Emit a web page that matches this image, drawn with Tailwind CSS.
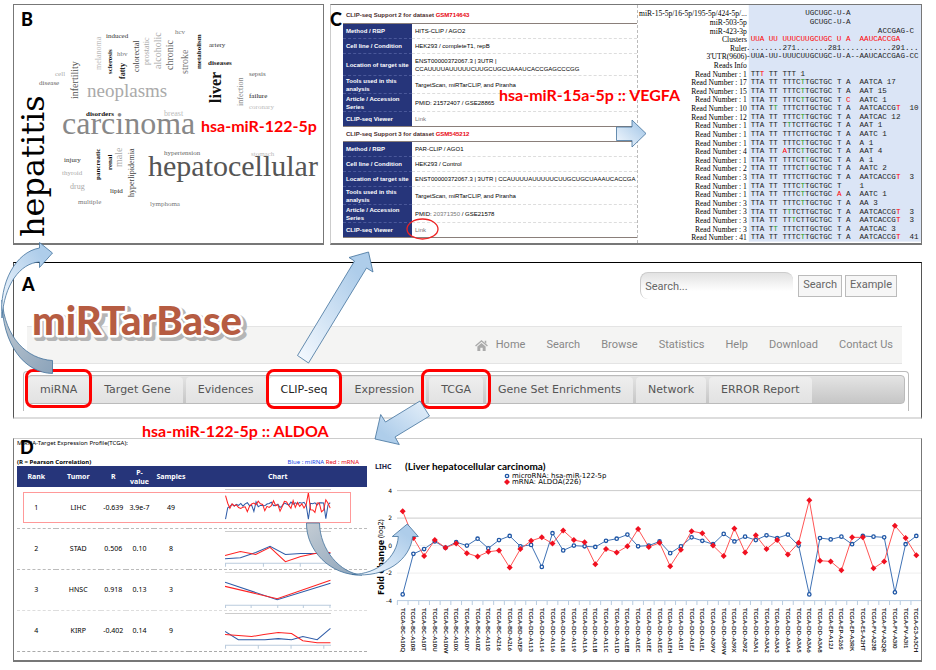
<!DOCTYPE html>
<html lang="en">
<head>
  <meta charset="UTF-8" />
  <meta name="viewport" content="width=device-width, initial-scale=1.0" />
  <title>miRTarBase</title>
  <script src="https://cdn.jsdelivr.net/npm/@tailwindcss/browser@4"></script>
</head>
<body class="bg-white text-black">

  <main class="relative w-full pt-1 pl-[13px] pr-[14px] pb-2">

    <div class="grid grid-cols-[311fr_592fr] gap-[6px]">

      <!-- B: word cloud -->
      <section class="border border-[#777] border-b-2">
        <svg id="cloud" viewBox="14 5 309 238" class="block w-full"></svg>
      </section>

      <!-- C: CLIP-seq support -->
      <section class="grid grid-cols-[308fr_284fr] border border-l-[#ccc] border-[#777] border-b-2">
        <div class="pl-3 pt-[6px] font-['Liberation_Sans',sans-serif] text-[6px] leading-[8px] border-r border-dashed border-[#bbb]">
          <h2 class="pl-[3px] pb-[4px] font-bold text-[#4a2c2c]">CLIP-seq Support 2 for dataset <span class="text-red-600">GSM714643</span></h2>
          <table class="w-full border-y border-[#8a7f7a]">
            <tbody>
              <tr class="h-[15px]"><th class="w-[69px] bg-[#26357a] text-white text-left pl-[3px] border-b border-dashed border-[#4a589a]">Method / RBP</th><td class="pl-[3px] border-b border-dashed border-[#ddd]">HITS-CLIP / AGO2</td></tr>
              <tr class="h-[15px]"><th class="bg-[#26357a] text-white text-left pl-[3px] border-b border-dashed border-[#4a589a]">Cell line / Condition</th><td class="pl-[3px] border-b border-dashed border-[#ddd]">HEK293 / completeT1, repB</td></tr>
              <tr class="h-[22px]"><th class="bg-[#26357a] text-white text-left pl-[3px] border-b border-dashed border-[#4a589a]">Location of target site</th><td class="pl-[3px] border-b border-dashed border-[#ddd]">ENST00000372067.3 | 3UTR |<br>CCAUUUUAUUUUUCUUGCUGCUAAAUCACCGAGCCCGG</td></tr>
              <tr class="h-[18px]"><th class="bg-[#26357a] text-white text-left pl-[3px] border-b border-dashed border-[#4a589a]">Tools used in this<br>analysis</th><td class="pl-[3px] border-b border-dashed border-[#ddd]">TargetScan, miRTarCLIP, and Piranha</td></tr>
              <tr class="h-[18px]"><th class="bg-[#26357a] text-white text-left pl-[3px] border-b border-dashed border-[#4a589a]">Article / Accession<br>Series</th><td class="pl-[3px] border-b border-dashed border-[#ddd]">PMID: 21572407 / GSE28865</td></tr>
              <tr class="h-[15px]"><th class="bg-[#26357a] text-white text-left pl-[3px]">CLIP-seq Viewer</th><td class="pl-[3px]"><a href="#" class="text-[#777]">Link</a></td></tr>
            </tbody>
          </table>
          <h2 class="pl-[3px] pt-[3px] pb-[3px] font-bold text-[#4a2c2c]">CLIP-seq Support 3 for dataset <span class="text-red-600">GSM545212</span></h2>
          <table class="w-full border-y border-[#8a7f7a]">
            <tbody>
              <tr class="h-[15px]"><th class="w-[69px] bg-[#26357a] text-white text-left pl-[3px] border-b border-dashed border-[#4a589a]">Method / RBP</th><td class="pl-[3px] border-b border-dashed border-[#ddd]">PAR-CLIP / AGO1</td></tr>
              <tr class="h-[15px]"><th class="bg-[#26357a] text-white text-left pl-[3px] border-b border-dashed border-[#4a589a]">Cell line / Condition</th><td class="pl-[3px] border-b border-dashed border-[#ddd]">HEK293 / Control</td></tr>
              <tr class="h-[15px]"><th class="bg-[#26357a] text-white text-left pl-[3px] border-b border-dashed border-[#4a589a]">Location of target site</th><td class="pl-[3px] whitespace-nowrap border-b border-dashed border-[#ddd]">ENST00000372067.3 | 3UTR | CCAUUUUAUUUUUCUUGCUGCUAAAUCACCGA</td></tr>
              <tr class="h-[18px]"><th class="bg-[#26357a] text-white text-left pl-[3px] border-b border-dashed border-[#4a589a]">Tools used in this<br>analysis</th><td class="pl-[3px] border-b border-dashed border-[#ddd]">TargetScan, miRTarCLIP, and Piranha</td></tr>
              <tr class="h-[18px]"><th class="bg-[#26357a] text-white text-left pl-[3px] border-b border-dashed border-[#4a589a]">Article / Accession<br>Series</th><td class="pl-[3px] border-b border-dashed border-[#ddd]">PMID: <span class="text-[#777]">20371350</span> / GSE21578</td></tr>
              <tr class="h-[15px]"><th class="bg-[#26357a] text-white text-left pl-[3px]">CLIP-seq Viewer</th><td class="pl-[3px]"><a href="#" class="text-[#777]">Link</a></td></tr>
            </tbody>
          </table>
        </div>
        <svg id="reads" viewBox="0 0 299 250" class="block w-full text-[8px]"></svg>
      </section>
    </div>

    <!-- A: site header -->
    <section class="relative mt-[17px] pt-[9px] pb-[6px] border border-t-black border-x-[#555] border-b-2 border-b-[#ddd]">
      <form class="flex justify-end items-center gap-[3px] pr-6 font-['Roboto',sans-serif] text-[11px] text-[#666]">
        <input type="text" aria-label="Search" placeholder="Search..." class="w-[153px] h-[27px] mr-[2px] pl-1 rounded-lg border-t border-l border-[#ccc] bg-linear-to-b from-[#e2e2e2] to-white to-70% placeholder:text-[#666]" />
        <button type="button" class="h-[22px] px-1 border border-[#bbb] bg-[#f6f6f6]">Search</button>
        <button type="button" class="h-[22px] px-1 border border-[#bbb] bg-[#f6f6f6]">Example</button>
      </form>

      <nav class="flex justify-end items-center h-[38px] mt-[27px] ml-[13px] mr-[19px] pr-[9px] bg-[#f4f4f3] border-y border-[#e4e4e4] font-['Roboto',sans-serif] text-[11px] text-[#888]">
        <a href="#" class="flex items-center gap-2">
          <svg viewBox="0 0 14 12" class="w-[13px] h-[11px]" fill="#aaa"><path d="M7 0 L14 6 L13 7 L7 2 L1 7 L0 6 Z M10.500 0.800 H12.200 V4 L10.500 2.500 Z M2.500 7 L7 3.200 L11.500 7 V12 H8.300 V8.500 H5.700 V12 H2.500 Z"/></svg>
          Home</a>
        <a href="#" class="ml-[21px]">Search</a>
        <a href="#" class="ml-[21px]">Browse</a>
        <a href="#" class="ml-[21px]">Statistics</a>
        <a href="#" class="ml-[21px]">Help</a>
        <a href="#" class="ml-[21px]">Download</a>
        <a href="#" class="ml-[21px]">Contact Us</a>
      </nav>

      <div class="mt-[7px] ml-[9px] mr-3 h-[40px] pt-[3px] px-[3px] border-t border-x border-[#bbb] rounded-t">
        <div class="flex items-end gap-[3px] h-[29px] rounded-sm border border-[#bbb] bg-linear-to-b from-[#e4e4e4] to-[#c6c6c6] font-['DejaVu_Sans',sans-serif] text-[11px] text-[#555]">
          <a href="#" class="relative px-3 h-[26px] leading-[26px] whitespace-nowrap rounded-t bg-linear-to-b from-[#eee] to-[#e2e2e2]">miRNA<span class="absolute -inset-x-[3px] -top-2 -bottom-[5px] border-[3px] border-[#f00] rounded-lg"></span></a>
          <a href="#" class="px-3 h-[26px] leading-[26px] whitespace-nowrap rounded-t bg-linear-to-b from-[#eee] to-[#e2e2e2]">Target Gene</a>
          <a href="#" class="px-3 h-[26px] leading-[26px] whitespace-nowrap rounded-t bg-linear-to-b from-[#eee] to-[#e2e2e2]">Evidences</a>
          <a href="#" class="relative px-3 h-[26px] leading-[26px] whitespace-nowrap rounded-t bg-white text-[#222]">CLIP-seq<span class="absolute -inset-x-[3px] -top-2 -bottom-[6px] border-[3px] border-[#f00] rounded-lg"></span></a>
          <a href="#" class="px-3 h-[26px] leading-[26px] whitespace-nowrap rounded-t bg-linear-to-b from-[#eee] to-[#e2e2e2]">Expression</a>
          <a href="#" class="relative px-3 h-[26px] leading-[26px] whitespace-nowrap rounded-t bg-linear-to-b from-[#eee] to-[#e2e2e2]">TCGA<span class="absolute -inset-x-2 -top-2 -bottom-[6px] border-[3px] border-[#f00] rounded-lg"></span></a>
          <a href="#" class="px-3 h-[26px] leading-[26px] whitespace-nowrap rounded-t bg-linear-to-b from-[#eee] to-[#e2e2e2]">Gene Set Enrichments</a>
          <a href="#" class="px-3 h-[26px] leading-[26px] whitespace-nowrap rounded-t bg-linear-to-b from-[#eee] to-[#e2e2e2]">Network</a>
          <a href="#" class="px-3 h-[26px] leading-[26px] whitespace-nowrap rounded-t bg-linear-to-b from-[#eee] to-[#e2e2e2]">ERROR Report</a>
        </div>
      </div>
    </section>

    <!-- D: expression profile -->
    <section class="grid grid-cols-[353fr_554fr] mt-[19px] border border-t-[#ccc] border-[#777] border-b-2">
      <div class="pl-[3px] pb-[8px] font-['Noto_Sans',sans-serif] text-[7px] leading-[9px]">
        <p class="text-[6px] leading-[8px]">MiRNA-Target Expression Profile(TCGA):</p>
        <div class="flex justify-between mt-[11px] pr-2 text-[6px] leading-[8px]">
          <b>(R = Pearson Correlation)</b>
          <span><span class="text-blue-700">Blue : miRNA</span> <span class="text-red-600">Red : mRNA</span></span>
        </div>
        <table class="w-full table-fixed text-center border-b border-dashed border-[#aaa]">
          <thead>
            <tr class="h-[21px] bg-[#26357a] text-white">
              <th class="w-[11%]">Rank</th><th class="w-[13%]">Tumor</th><th class="w-[7%]">R</th><th class="w-[8%]">P-<br>value</th><th class="w-[10%]">Samples</th><th>Chart</th>
            </tr>
          </thead>
          <tbody>
            <tr class="relative h-[41px]">
              <td>1<span class="absolute left-[6px] right-4 top-[5px] bottom-[5px] border border-[#f99]"></span></td><td>LIHC</td><td>-0.639</td><td>3.9e-7</td><td>49</td>
              <td class="px-9"><svg id="spark" viewBox="226 489 104 37" class="block w-full"></svg></td>
            </tr>
            <tr class="h-[41px] border-t border-dashed border-[#bbb]">
              <td>2</td><td>STAD</td><td>0.506</td><td>0.10</td><td>8</td>
              <td class="px-9"><svg viewBox="226 531 104 37" fill="none" class="block w-full">
                <path stroke="#ccc" d="M226 532.500 H330"/>
                <path stroke="#bcd" d="M226 563.500 H330 M226.500 563 v4 M263.500 563 v4 M299.500 563 v4"/>
                <path stroke="#2f5ca8" d="M226 559 L241 558 L256 553 L270 547 L285 555 L300 554 L329 554"/>
                <path stroke="#f22" d="M226 556 L241 552 L256 555 L270 548 L285 562 L300 557 L314 554 L329 553"/>
              </svg></td>
            </tr>
            <tr class="h-[41px] border-t border-dashed border-[#bbb]">
              <td>3</td><td>HNSC</td><td>0.918</td><td>0.13</td><td>3</td>
              <td class="px-9"><svg viewBox="226 571 104 37" fill="none" class="block w-full">
                <path stroke="#ddd" d="M226 572.500 H330"/>
                <path stroke="#bcd" d="M226 604.500 H330 M226.500 604 v4 M251.500 604 v4 M277.500 604 v4 M302.500 604 v4 M328.500 604 v4"/>
                <path stroke="#2f5ca8" d="M226 582 L277 599 L329 583"/>
                <path stroke="#f22" d="M226 586 L277 598 L329 580"/>
              </svg></td>
            </tr>
            <tr class="h-[41px] border-t border-dashed border-[#ddd]">
              <td>4</td><td>KIRP</td><td>-0.402</td><td>0.14</td><td>9</td>
              <td class="px-9"><svg viewBox="226 612 104 37" fill="none" class="block w-full">
                <path stroke="#ccc" d="M226 613.500 H330"/>
                <path stroke="#bcd" d="M226 644.500 H330 M226.500 644 v4 M258.500 644 v4 M290.500 644 v4 M322.500 644 v4"/>
                <path stroke="#2f5ca8" d="M226 631 L239 639 L265 639 L278 638 L291 639 L302 636 L316 639 L329 628"/>
                <path stroke="#f22" d="M226 634 L252 636 L264 634 L278 632 L291 633 L302 640 L316 642 L329 642"/>
              </svg></td>
            </tr>
          </tbody>
        </table>
      </div>
      <svg id="chart" viewBox="367 439 554 221" class="block w-full"></svg>
    </section>

    <!-- annotations and arrows over all panels -->
    <svg viewBox="0 0 936 670" class="absolute top-0 left-0 w-full pointer-events-none font-['Lato',sans-serif] font-bold">
      <defs>
        <linearGradient id="up" x1="0" y1="1" x2="1" y2="0"><stop offset="0" stop-color="#f6faff"/><stop offset="0.800" stop-color="#aecdea"/></linearGradient>
        <linearGradient id="down" x1="1" y1="0" x2="0" y2="1"><stop offset="0" stop-color="#e6f0fa"/><stop offset="0.800" stop-color="#aecdea"/></linearGradient>
        <linearGradient id="dark" x1="0" y1="0" x2="1" y2="1"><stop offset="0" stop-color="#c4ccd4"/><stop offset="1" stop-color="#8ba3ba"/></linearGradient>
      </defs>
      <g font-size="18" font-weight="900">
        <text x="21" y="26">B</text>
        <text x="330" y="26">C</text>
        <text x="22" y="291">A</text>
        <text x="20" y="454">D</text>
      </g>

      <!-- logo -->
      <g font-size="40" font-weight="900" stroke-linejoin="round">
        <text x="35" y="338" fill="#b5b5b5" stroke="#b5b5b5" stroke-width="6">miRTarBase</text>
        <text x="32" y="335" fill="#b65c42" stroke="#fff" stroke-width="5" paint-order="stroke">miRTarBase</text>
      </g>

      <g font-size="16" fill="#f00">
        <text x="201" y="132">hsa-miR-122-5p</text>
        <text x="499" y="101">hsa-miR-15a-5p :: VEGFA</text>
        <text x="142" y="437">hsa-miR-122-5p :: ALDOA</text>
      </g>
      <ellipse cx="422.500" cy="229" rx="15.500" ry="10" fill="none" stroke="#e22" stroke-width="1.300"/>
      <g stroke="#41719c" stroke-width="0.800" stroke-linejoin="round">
        <path fill="url(#dark)" d="M2 300 C2 345 25 373 52.500 373.500 V360.500 C27 359 5 338 2 300 Z"/>
        <path fill="url(#up)" d="M2 318 C-1 282 16 252 39.500 248 V242.500 L52.500 253 L39.500 267.500 V262 C20 263 4 285 2 318 Z"/>
        <path fill="url(#up)" d="M297.500 355.500 L354.500 261 L349 257.500 L368.500 252 L373 272 L366.500 268 L308.500 363 Z"/>
        <path fill="url(#down)" d="M420 401 L385.500 422 L380.700 414.500 L375 439 L399.300 444.500 L395 437 L429.500 416 Z"/>
        <path fill="url(#up)" d="M616.500 127 H632 V120 L646 133.500 L632 147 V140.500 H616.500 Z"/>
        <path fill="url(#dark)" d="M306.500 523 C306 550 330 576 362 575 C340 573 320 550 319.500 523 Z"/>
        <path fill="url(#up)" d="M352 574.500 C378 574 397 557 398.300 536.500 H392.300 L407.300 524 L418.300 536.500 H412.700 C410 560 386 578 352 574.500 Z"/>
      </g>
    </svg>
  </main>

  <script>
    const NS = "http://www.w3.org/2000/svg";

    function add(parent, tag, attrs, text) {
      const el = document.createElementNS(NS, tag);
      for (const k in attrs) el.setAttribute(k, attrs[k]);
      if (text) el.textContent = text;
      parent.appendChild(el);
      return el;
    }

    // word, x, baseline, size, colour, weight, rotated
    const words = [
      ["hepatitis", 44, 237, 32, "#000", 400, 1],
      ["carcinoma", 62, 134, 32, "#888", 400, 0],
      ["hepatocellular", 148, 176, 30, "#555", 400, 0],
      ["neoplasms", 87, 97, 19, "#aaa", 400, 0],
      ["liver", 221, 103, 16, "#111", 700, 1],
      ["induced", 106, 38, 7, "#333", 400, 0],
      ["hbv", 117, 56, 7, "#777", 400, 0],
      ["hcv", 175, 34, 7, "#777", 400, 0],
      ["artery", 209, 47, 7, "#333", 400, 0],
      ["diseases", 208, 65, 7, "#222", 700, 0],
      ["sepsis", 249, 76, 7, "#666", 400, 0],
      ["failure", 249, 98, 7, "#222", 400, 0],
      ["coronary", 249, 109, 7, "#bbb", 400, 0],
      ["cell", 55, 76, 7, "#aaa", 400, 0],
      ["disease", 39, 85, 7, "#666", 400, 0],
      ["disorders", 86, 116, 7, "#111", 700, 0],
      ["breast", 164, 116, 8, "#bbb", 400, 0],
      ["hypertension", 164, 155, 7, "#666", 400, 0],
      ["stomach", 251, 156, 7, "#bbb", 400, 0],
      ["injury", 64, 162, 7, "#333", 400, 0],
      ["thyroid", 62, 175, 7, "#aaa", 400, 0],
      ["drug", 70, 189, 8, "#aaa", 400, 0],
      ["multiple", 78, 204, 7, "#777", 400, 0],
      ["lipid", 110, 193, 7, "#222", 400, 0],
      ["lymphoma", 150, 206, 7, "#777", 400, 0],
      ["infertility", 78, 99, 10, "#555", 400, 1],
      ["melanoma", 101, 70, 8, "#bbb", 400, 1],
      ["sclerosis", 112, 74, 7, "#111", 700, 1],
      ["fatty", 125, 79, 8, "#222", 700, 1],
      ["colorectal", 139, 72, 8, "#444", 400, 1],
      ["prostatic", 149, 65, 8, "#aaa", 400, 1],
      ["alcoholic", 161, 69, 10, "#aaa", 400, 1],
      ["chronic", 173, 70, 10, "#666", 400, 1],
      ["stroke", 188, 74, 10, "#777", 400, 1],
      ["metabolism", 201, 69, 7, "#111", 700, 1],
      ["infection", 243, 106, 8, "#888", 400, 1],
      ["pancreatic", 100, 180, 7, "#111", 700, 1],
      ["renal", 112, 170, 7, "#111", 700, 1],
      ["male", 122, 167, 10, "#aaa", 400, 1],
      ["hyperlipidemia", 134, 197, 8, "#444", 400, 1]
    ];
    const cloud = document.getElementById("cloud");
    words.forEach(([w, x, y, size, fill, weight, rot]) => {
      const family = w === "hepatitis" ? "DejaVu Serif, serif" : "Liberation Serif, serif";
      const attrs = { x, y, fill, "font-size": size, "font-weight": weight, "font-family": family };
      if (rot) attrs.transform = `rotate(-90 ${x} ${y})`;
      add(cloud, "text", attrs, w);
    });

    // label, first column, aligned sequence; [X] is a red base, <X> a green one
    const reads = [
      ["miR-15-5p/16-5p/195-5p/424-5p/...", 12, "UGCUGC-U-A"],
      ["miR-503-5p", 13, "GCUGC-U-A"],
      ["miR-423-3p", 28, "ACCGAG-C"],
      ["Clusters", 0, "[UUA UU UUUCUUGCUGC U A  AAUCACCGA]"],
      ["Ruler", -1, "........271.......281...........291..."],
      ["3'UTR(9606)", -1, "-UUA-UU-UUUCUUGCUGC-U-A--AAUCACCGAG-CC"],
      ["Reads Info", 0, ""],
      ["Read Number : 1", 0, "TT[T] TT TTT 1"],
      ["Read Number : 17", 0, "TTA TT TTTC<T>TGCTGC T A  AATCA 17"],
      ["Read Number : 15", 0, "TTA TT TTTC<T>TGCTGC T A  AAT 15"],
      ["Read Number : 1", 0, "TTA TT TTTC<T>TGCTGC T [C]  AATC 1"],
      ["Read Number : 10", 0, "TTA T<T> TTTCTTGCTGC T A  AATCACCG[T]  10"],
      ["Read Number : 12", 0, "TTA TT TTTC<T>TGCTGC T A  AATCAC 12"],
      ["Read Number : 1", 0, "TTA TT T<T>TCTTGCTGC T A  AAT 1"],
      ["Read Number : 1", 0, "TTA TT TTTCTTGCTGC T A  AATC 1"],
      ["Read Number : 1", 0, "TTA TT TTTC<T>TGCTGC T A  A 1"],
      ["Read Number : 4", 0, "TTA TT [A]TTC<T>TGCTGC T A  AAT 4"],
      ["Read Number : 1", 0, "TTA TT TTTCT<T>GCTGC T A  A 1"],
      ["Read Number : 2", 0, "TTA TT TTTCT<T>GCTGC T A  AATC 2"],
      ["Read Number : 3", 0, "TTA TT TTTCTTGCTGC T A  AATCACCG[T]  3"],
      ["Read Number : 1", 0, "TTA TT TTTC<T>TGCTGC T    1"],
      ["Read Number : 1", 0, "TTA TT TTTC<T>TGCTGC [A] A  AATC 1"],
      ["Read Number : 3", 0, "TTA TT TTTC<T>TGCTGC T A  AA 3"],
      ["Read Number : 3", 0, "TTA TT T<T>TCTTGCTGC T A  AATCACCG[T]  3"],
      ["Read Number : 3", 0, "TTA TT TT<T>CTTGCTGC T A  AATCACCG[T]  3"],
      ["Read Number : 3", 0, "TTA T<T> TTTCTTGCTGC T A  AATCAC 3"],
      ["Read Number : 41", 0, "TTA TT TTTC<T>TGCTGC T A  AATCACCG[T]  41"]
    ];
    const readsSvg = document.getElementById("reads");
    add(readsSvg, "rect", { x: 117, y: 0, width: 182, height: 250, fill: "#dbe5f6" });
    reads.forEach(([label, col, seq], i) => {
      const y = 11 + i * 9.1;
      add(readsSvg, "text", { x: 115, y: y + 1, "text-anchor": "end", "font-family": "Liberation Serif, serif" }, label);
      const t = add(readsSvg, "text", { x: 119 + col * 4.8, y, "font-family": "Liberation Mono, monospace", class: "whitespace-pre" });
      (seq.match(/\[[^\]]+\]|<[^>]+>|[^\[<]+/g) || []).forEach(part => {
        const fill = part[0] === "[" ? "#f00" : part[0] === "<" ? "#1a9a1a" : "#222";
        add(t, "tspan", { fill }, part.replace(/[\[\]<>]/g, ""));
      });
    });

    const mirna = [-3.55, -0.6, -0.25, 0.3, -0.15, 0.25, 0, 0.5, -0.2, 0.4, 0.7, -0.05, 0.05, -1.55, 0.9, -0.35, 0, -0.05, -0.1, 0.35, 0.5, 0.8, -0.05, 0, 0.3, -0.55, -0.05, 0.6, 0.35, 0.1, 0.85, 0.3, 0.65, 0.4, 0.75, 0.55, 0.8, 0, -3.55, 0.55, 0.45, 0.65, 0.1, 0.7, 0.65, 0.6, -3.4, 0.1, 0.7];
    const mrna = [2.5, 0.55, -0.75, 0.4, -0.15, 0.15, -0.55, -0.8, -0.45, -0.35, -1.6, -0.25, 0.35, 0.6, 0.15, 1.1, 0.4, 0.25, -1.35, -0.25, -0.5, -0.05, 1.2, -0.1, 0.2, -1.5, -0.3, 1.05, 0.9, 0, -0.75, 1.25, -0.5, 0.75, -0.25, 0.4, -0.65, 0.2, 3.3, -1.1, -1.15, -1.8, 0.6, 0.6, -1.65, -1.15, 1.45, 0.55, -0.7];
    const samples = ("BC-A10Q BC-A10R BC-A10T BC-A10U BC-A10W BC-A10X BC-A10Y BC-A10Z BC-A110 BC-A216 BD-A2L6 BD-A3EP " +
      "DD-A113 DD-A114 DD-A116 DD-A118 DD-A119 DD-A11A DD-A11B DD-A11C DD-A11D DD-A1EB DD-A1EC DD-A1EE DD-A1EG DD-A1EH DD-A1EI DD-A1EJ DD-A1EL " +
      "DD-A39V DD-A39W DD-A39X DD-A39Z DD-A3A1 DD-A3A2 DD-A3A3 DD-A3A4 DD-A3A5 DD-A3A6 DD-A3A8 EP-A12J EP-A26S EP-A3RK ES-A2HT FV-A23B FV-A2QR FV-A3I0 FV-A3I1 G3-A3CH").split(" ");

    function line(svg, data, x0, dx, y0, dy, stroke) {
      const points = data.map((v, i) => `${x0 + i * dx},${y0 - v * dy}`).join(" ");
      add(svg, "polyline", { points, fill: "none", stroke, "stroke-width": 1 });
    }

    const spark = document.getElementById("spark");
    add(spark, "path", { d: "M226 490.500 H330", stroke: "#ccc" });
    line(spark, mirna, 226.5, 2.13, 506, 3.8, "#2f5ca8");
    line(spark, mrna, 226.5, 2.13, 506, 3.8, "#f22");

    const chart = document.getElementById("chart");
    [4, 2, 0, -2, -4].forEach(v => {
      const y = 545.6 - v * 13.75;
      add(chart, "path", { d: `M397 ${y} H921`, stroke: v === -4 ? "#b8cce0" : v > 0 ? "#ccc" : "#eee" });
      add(chart, "text", { x: 392, y: y + 2, "text-anchor": "end", "font-size": 6, "font-family": "DejaVu Sans, sans-serif" }, String(v));
    });
    samples.forEach((s, i) => {
      const x = 402.7 + i * 10.7;
      add(chart, "path", { d: `M${x - 5.35} 601 v4`, stroke: "#b8cce0" });
      add(chart, "text", { x: x - 2, y: 608, transform: `rotate(90 ${x - 2} 608)`, "font-size": 6, "font-weight": 700, fill: "#222", "font-family": "Lato, sans-serif" }, "TCGA-" + s);
    });
    line(chart, mirna, 402.7, 10.7, 545.6, 13.75, "#3f72b5");
    line(chart, mrna, 402.7, 10.7, 545.6, 13.75, "#f55");
    function dot(x, y) {
      add(chart, "circle", { cx: x, cy: y, r: 1.7, fill: "#fff", stroke: "#1d55a5", "stroke-width": 1.3 });
    }
    function diamond(x, y) {
      add(chart, "path", { d: `M${x} ${y - 3} l3 3 l-3 3 l-3 -3 Z`, fill: "#f01020" });
    }
    mirna.forEach((v, i) => dot(402.7 + i * 10.7, 545.6 - v * 13.75));
    mrna.forEach((v, i) => diamond(402.7 + i * 10.7, 545.6 - v * 13.75));

    add(chart, "text", { x: 375, y: 469, "font-size": 7, "font-weight": 700, fill: "#224", "font-family": "Noto Sans, sans-serif" }, "LIHC");
    add(chart, "text", { x: 405, y: 470, "font-size": 10, "font-weight": 700, "font-family": "Lato, sans-serif" }, "(Liver hepatocellular carcinoma)");
    add(chart, "text", { x: 512, y: 478, "font-size": 7, "font-family": "DejaVu Sans, sans-serif" }, "microRNA: hsa-miR-122-5p");
    add(chart, "text", { x: 512, y: 484, "font-size": 7, "font-family": "DejaVu Sans, sans-serif" }, "mRNA: ALDOA(226)");
    dot(507, 476);
    diamond(507, 482);
    add(chart, "text", { x: 384, y: 595, transform: "rotate(-90 384 595)", "font-size": 9, "font-weight": 700, "font-family": "Noto Sans, sans-serif" }, "Fold Change");
    add(chart, "text", { x: 383, y: 538, transform: "rotate(-90 383 538)", "font-size": 7, "font-family": "Noto Sans, sans-serif" }, "(log2)");
  </script>
</body>
</html>
